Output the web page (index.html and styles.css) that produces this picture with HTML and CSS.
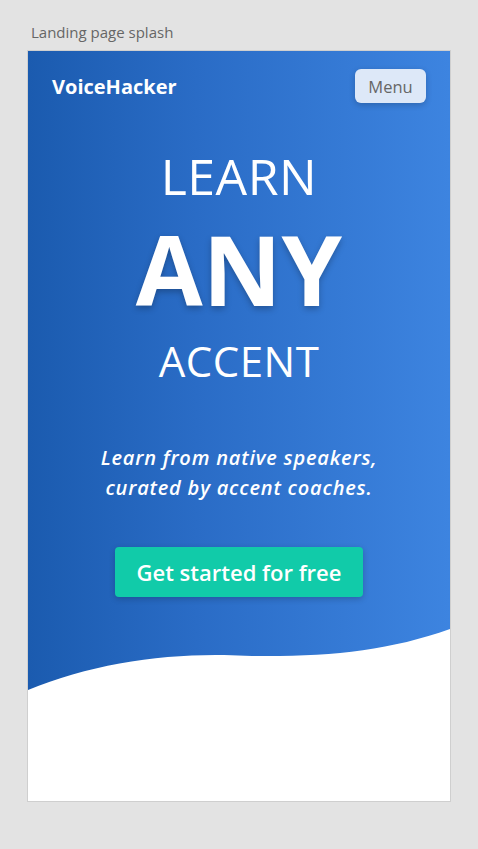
FILE: index.html
```html
<!DOCTYPE html>
<html lang="en">
<head>
<meta charset="utf-8">
<title>Landing page splash</title>
<link rel="stylesheet" href="styles.css">
</head>
<body>
<div class="label">Landing page splash</div>
<div class="frame">
  <section class="hero">
    <header class="topbar">
      <div class="logo">VoiceHacker</div>
      <button class="menu">Menu</button>
    </header>
    <h1 class="title">
      <span class="t-learn">LEARN</span>
      <span class="t-any">ANY</span>
      <span class="t-accent">ACCENT</span>
    </h1>
    <p class="tagline">Learn from native speakers,<br>curated by accent coaches.</p>
    <div class="cta-wrap"><a class="cta">Get started for free</a></div>
    <svg class="wave" viewBox="0 0 422 62" preserveAspectRatio="none" aria-hidden="true">
      <path d="M0,61 C60,36 130,25 196,26 C206,26 214,27 224,27 C300,28 360,22 422,0 L422,62 L0,62 Z" fill="#ffffff"/>
    </svg>
  </section>
  <div class="rest"></div>
</div>
</body>
</html>
```
FILE: styles.css
```css
html, body {
  margin: 0;
  padding: 0;
}
body {
  background: #e3e3e3;
  font-family: "Open Sans", "Noto Sans", sans-serif;
  width: 478px;
  height: 849px;
  overflow: hidden;
}
.label {
  padding: 22px 0 0 31px;
  height: 20px;
  line-height: 20px;
  font-size: 15px;
  color: #666666;
  margin-bottom: 8px;
}
.frame {
  margin-left: 27px;
  width: 422px;
  height: 750px;
  border: 1px solid #cfcfcf;
  background: #ffffff;
  display: flex;
  flex-direction: column;
}
.hero {
  background: linear-gradient(90deg, #1b5baf 0%, #2a6cc6 40%, #3d84e0 100%);
  display: flex;
  flex-direction: column;
}
.topbar {
  display: flex;
  justify-content: space-between;
  align-items: center;
  padding: 18px 24px 0 24px;
}
.logo {
  color: #ffffff;
  font-weight: 700;
  font-size: 20px;
}
.menu {
  height: 34px;
  width: 71px;
  border: none;
  border-radius: 6px;
  background: #dde8f8;
  color: #666666;
  font-family: inherit;
  font-size: 16.5px;
  box-shadow: 0 2px 6px rgba(0, 0, 0, 0.2);
}
.title {
  margin: 48px 0 0 0;
  display: flex;
  flex-direction: column;
  align-items: center;
  color: #ffffff;
  font-weight: normal;
}
.t-learn {
  font-size: 50px;
  line-height: 50px;
  font-weight: 400;
  letter-spacing: 0.5px;
}
.t-any {
  margin-top: 19px;
  font-size: 97px;
  line-height: 97px;
  font-weight: 700;
  text-shadow: 0 3px 6px rgba(0, 0, 0, 0.25);
}
.t-accent {
  margin-top: 23px;
  font-size: 42px;
  line-height: 42px;
  font-weight: 400;
  letter-spacing: 0.5px;
}
.tagline {
  margin: 61px 0 0 0;
  text-align: center;
  color: #ffffff;
  font-style: italic;
  font-weight: 600;
  font-size: 20px;
  line-height: 30px;
  letter-spacing: 0.8px;
}
.cta-wrap {
  display: flex;
  justify-content: center;
  margin-top: 44px;
}
.cta {
  display: flex;
  align-items: center;
  justify-content: center;
  width: 248px;
  height: 50px;
  border-radius: 4px;
  background: #11cba9;
  color: #ffffff;
  font-size: 22px;
  font-weight: 600;
  box-shadow: 0 2px 6px rgba(0, 0, 0, 0.2);
}
.wave {
  display: block;
  width: 422px;
  height: 62px;
  margin-top: 32px;
}
.rest {
  flex: 1;
}
```
